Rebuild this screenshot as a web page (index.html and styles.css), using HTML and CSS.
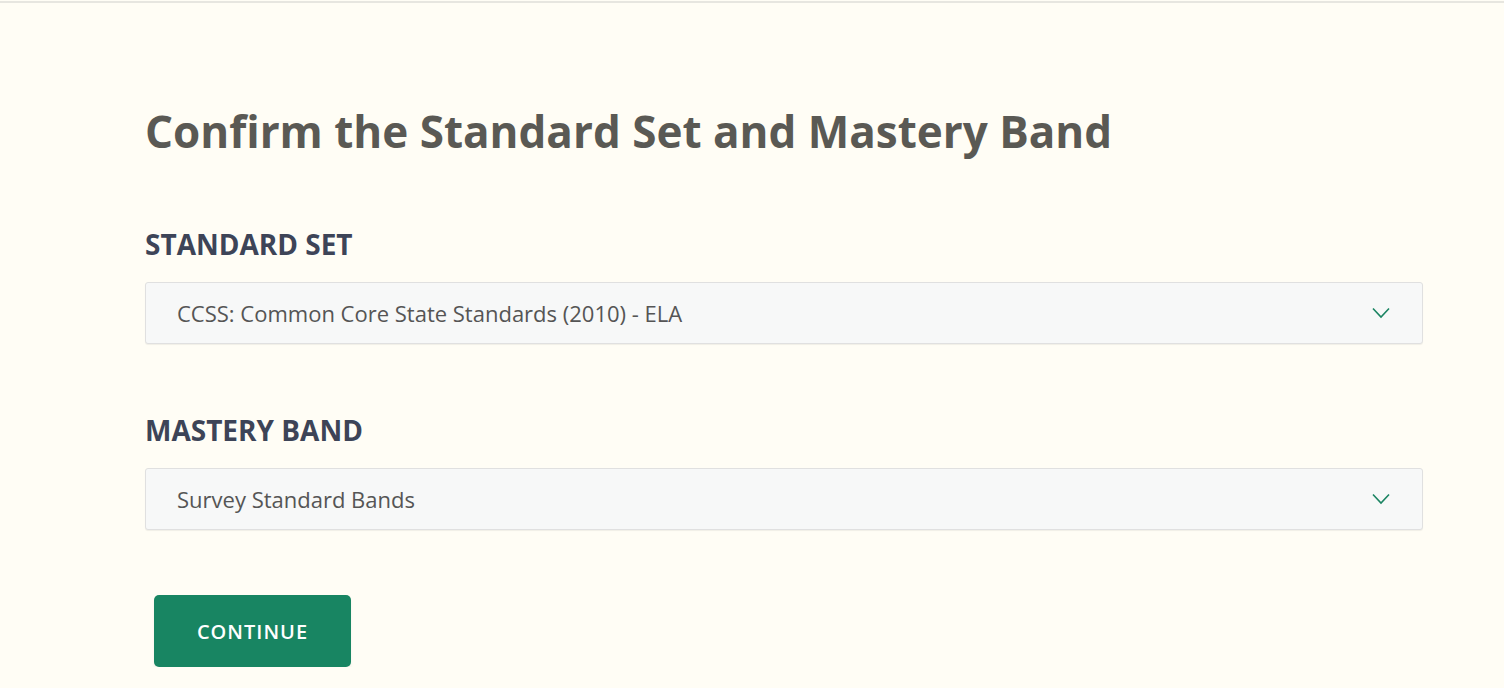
FILE: index.html
```html
<!DOCTYPE html>
<html>
<head>
<title>Confirm the Standard Set and Mastery Band</title>
<meta name="viewport" content="width=device-width">
<link rel="stylesheet" href="styles.css">
</head>
<body>
<div class="top_rule"></div>
<div class="page">
	<h1>Confirm the Standard Set and Mastery Band</h1>

	<div class="field">
		<h2>STANDARD SET</h2>
		<div class="select_box">
			<span>CCSS: Common Core State Standards (2010) - ELA</span>
			<svg class="chevron" width="18" height="12" viewBox="0 0 18 12"><path d="M1 1.5 L9 10 L17 1.5" fill="none" stroke="#1b8462" stroke-width="1.6"/></svg>
		</div>
	</div>

	<div class="field last_field">
		<h2>MASTERY BAND</h2>
		<div class="select_box">
			<span>Survey Standard Bands</span>
			<svg class="chevron" width="18" height="12" viewBox="0 0 18 12"><path d="M1 1.5 L9 10 L17 1.5" fill="none" stroke="#1b8462" stroke-width="1.6"/></svg>
		</div>
	</div>

	<button type="button" class="continue">CONTINUE</button>
</div>
</body>
</html>
```

FILE: styles.css
```css
body {
	margin: 0;
	background: #fffdf5;
	font-family: "Open Sans", "Liberation Sans", sans-serif;
}
.top_rule {
	margin-top: 1px;
	height: 2px;
	background: #e7e6e0;
}
.page {
	padding: 98px 81px 0 145px;
}
h1 {
	font-size: 44px;
	font-weight: 700;
	color: #5a5954;
	margin: 0 0 65px 0;
	line-height: 60px;
}
h2 {
	font-size: 28px;
	font-weight: 700;
	color: #3d4457;
	margin: 0 0 20px 0;
	line-height: 36px;
}
.field {
	margin-bottom: 68px;
}
.last_field {
	margin-bottom: 65px;
}
.select_box {
	display: flex;
	align-items: center;
	justify-content: space-between;
	height: 60px;
	border: 1px solid #e0e0e0;
	border-radius: 3px;
	background: #f7f8f8;
	padding: 0 32px 0 31px;
	box-shadow: 0 1px 1px rgba(0,0,0,0.06);
	font-size: 22px;
	color: #555555;
}
.continue {
	margin-left: 9px;
	width: 197px;
	height: 72px;
	border: none;
	border-radius: 5px;
	background: #188562;
	color: #ffffff;
	font-family: "Open Sans", "Liberation Sans", sans-serif;
	font-size: 20px;
	font-weight: 600;
	letter-spacing: 1px;
	box-shadow: 0 3px 3px rgba(0,0,0,0.05);
}
```
